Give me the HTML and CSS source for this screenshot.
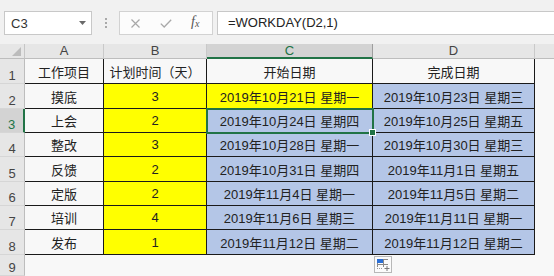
FILE: index.html
```html
<html>
    <head>
        <meta charset="utf-8">
        <title>WORKDAY</title>
        <link rel="stylesheet" href="styles.css">
    </head>
    <body>
        <div class="toolbar">
            <div class="namebox">
                <span>C3</span>
                <svg class="caret" width="7" height="4" viewBox="0 0 7 4"><path d="M0 0 L7 0 L3.5 4 Z" fill="#6a6a6a"/></svg>
            </div>
            <div class="grip"><i></i><i></i><i></i></div>
            <div class="fnbuttons">
                <svg class="btn-x" width="9" height="9" viewBox="0 0 9 9"><path d="M0.5 0.5 L8.5 8.5 M8.5 0.5 L0.5 8.5" stroke="#a8a8a8" stroke-width="1.2" fill="none"/></svg>
                <svg class="btn-ok" width="12" height="9" viewBox="0 0 12 9"><path d="M0.8 4.6 L4.2 8 L11.2 0.8" stroke="#a8a8a8" stroke-width="1.3" fill="none"/></svg>
                <span class="fx">f<sub>x</sub></span>
            </div>
            <div class="formula">=WORKDAY(D2,1)</div>
        </div>

        <div class="sheet">
            <div class="corner"><svg width="9" height="9" viewBox="0 0 9 9"><path d="M9 0 L9 9 L0 9 Z" fill="#bcbcbc"/></svg></div>
            <div class="ch">A</div>
            <div class="ch">B</div>
            <div class="ch sel">C</div>
            <div class="ch">D</div>
            <div class="ch end"></div>

            <div class="rh">1</div>
            <div class="c">工作项目</div>
            <div class="c">计划时间（天）</div>
            <div class="c">开始日期</div>
            <div class="c">完成日期</div>
            <div class="e"></div>

            <div class="rh">2</div>
            <div class="c">摸底</div>
            <div class="c y">3</div>
            <div class="c y">2019年10月21日 星期一</div>
            <div class="c b">2019年10月23日 星期三</div>
            <div class="e"></div>

            <div class="rh sel">3</div>
            <div class="c">上会</div>
            <div class="c y">2</div>
            <div class="c b active">2019年10月24日 星期四</div>
            <div class="c b">2019年10月25日 星期五</div>
            <div class="e"></div>

            <div class="rh">4</div>
            <div class="c">整改</div>
            <div class="c y">3</div>
            <div class="c b">2019年10月28日 星期一</div>
            <div class="c b">2019年10月30日 星期三</div>
            <div class="e"></div>

            <div class="rh">5</div>
            <div class="c">反馈</div>
            <div class="c y">2</div>
            <div class="c b">2019年10月31日 星期四</div>
            <div class="c b">2019年11月1日 星期五</div>
            <div class="e"></div>

            <div class="rh">6</div>
            <div class="c">定版</div>
            <div class="c y">2</div>
            <div class="c b">2019年11月4日 星期一</div>
            <div class="c b">2019年11月5日 星期二</div>
            <div class="e"></div>

            <div class="rh">7</div>
            <div class="c">培训</div>
            <div class="c y">4</div>
            <div class="c b">2019年11月6日 星期三</div>
            <div class="c b">2019年11月11日 星期一</div>
            <div class="e"></div>

            <div class="rh">8</div>
            <div class="c">发布</div>
            <div class="c y">1</div>
            <div class="c b">2019年11月12日 星期二</div>
            <div class="c b">2019年11月12日 星期二</div>
            <div class="e"></div>

            <div class="rh">9</div>
            <div class="e"></div>
            <div class="e"></div>
            <div class="e"></div>
            <div class="e"></div>
            <div class="e"></div>

            <div class="quick">
                <svg width="18" height="17" viewBox="0 0 18 17">
                    <rect x="0.5" y="0.5" width="17" height="16" fill="#fbfbfb" stroke="#b8b8b8"/>
                    <rect x="3" y="3" width="6" height="4" fill="#2b6fd6"/>
                    <path d="M10 3.5 H14 M3 8.5 H14 M9.5 3 V11 M3.5 7 V11" stroke="#8a8a8a" stroke-width="1" fill="none"/>
                    <path d="M3 12.5 H9" stroke="#9a9a9a" stroke-width="1" stroke-dasharray="1 1" fill="none"/>
                    <path d="M13 10 V15 M10.5 12.5 H15.5" stroke="#7a7a7a" stroke-width="1" fill="none"/>
                </svg>
            </div>
        </div>
    </body>
</html>
```

FILE: styles.css
```css
html, body{
    margin: 0px;
    padding: 0px;
    width: 100%;
    height: 100%;
    overflow: hidden;
    background-color: #f3f3f3;
    font-family: "Liberation Sans", "Noto Sans CJK SC", sans-serif;
    font-size: 13px;
    color: #222;
}
.toolbar{
    display: flex;
    align-items: flex-start;
    height: 44px;
    box-sizing: border-box;
    padding-top: 11px;
    padding-left: 4px;
    background-color: #f1f1f1;
}
.namebox{
    display: flex;
    align-items: center;
    justify-content: space-between;
    width: 88px;
    height: 24px;
    box-sizing: border-box;
    padding-left: 6px;
    padding-right: 5px;
    background-color: white;
    border: 1px solid #c8c8c8;
    color: #333;
}
.grip{
    display: flex;
    flex-direction: column;
    align-items: center;
    justify-content: center;
    gap: 2px;
    width: 27px;
    height: 24px;
}
.grip i{
    display: block;
    width: 2px;
    height: 2px;
    background-color: #a9a9a9;
}
.fnbuttons{
    display: flex;
    align-items: center;
    width: 94px;
    height: 24px;
    box-sizing: border-box;
    background-color: #fcfcfc;
    border: 1px solid #d2d2d2;
}
.btn-x{
    margin-left: 11px;
}
.btn-ok{
    margin-left: 20px;
}
.fx{
    margin-left: 19px;
    font-family: "Liberation Serif", serif;
    font-style: italic;
    font-size: 14px;
    color: #555;
    line-height: 14px;
}
.fx sub{
    font-size: 10px;
    vertical-align: -1px;
}
.formula{
    flex: 1;
    height: 24px;
    box-sizing: border-box;
    margin-left: 4px;
    margin-right: -2px;
    padding-left: 10px;
    line-height: 22px;
    background-color: white;
    border: 1px solid #c8c8c8;
    color: #222;
}
.sheet{
    position: relative;
    display: grid;
    grid-template-columns: 25px 79px 103px 166px 162px 1fr;
    grid-template-rows: 15px 25px 25px 24px 24px 25px 24px 24px 25px 21px;
    background-color: #f8f8f8;
}
.corner, .ch, .rh{
    box-sizing: border-box;
    background-color: #e6e6e6;
    color: #444;
    display: flex;
    align-items: center;
    justify-content: center;
}
.corner{
    justify-content: flex-end;
    align-items: flex-end;
    padding-right: 3px;
    padding-bottom: 2px;
    border-right: 1px solid #c6c6c6;
    border-bottom: 1px solid #bdbdbd;
}
.ch{
    border-right: 1px solid #c9c9c9;
    border-bottom: 1px solid #bdbdbd;
    line-height: 14px;
}
.ch.end{
    border-right: none;
}
.ch.sel{
    background-color: #d3d3d3;
    color: #217346;
    border-bottom: 2px solid #217346;
    border-right-color: #9e9e9e;
}
.rh{
    align-items: flex-end;
    padding-bottom: 0px;
    line-height: 15px;
    border-right: 1px solid #bdbdbd;
    border-bottom: 1px solid #d6d6d6;
}
.rh.sel{
    background-color: #d3d3d3;
    color: #217346;
    border-right: 2px solid #217346;
}
.c{
    display: flex;
    align-items: center;
    justify-content: center;
    box-sizing: border-box;
    border-right: 1px solid #1a1a1a;
    border-bottom: 1px solid #1a1a1a;
    white-space: nowrap;
    color: #222;
}
.y{
    background-color: #ffff00;
}
.b{
    background-color: #b4c6e7;
}
.active{
    position: relative;
    outline: 2px solid #217346;
    outline-offset: -1px;
}
.active::after{
    content: '';
    position: absolute;
    right: -4px;
    bottom: -4px;
    width: 5px;
    height: 5px;
    background-color: #217346;
    border: 1px solid white;
}
.e{
    background-color: #f8f8f8;
}
.quick{
    position: absolute;
    left: 374px;
    top: 212px;
    width: 18px;
    height: 17px;
}
.quick svg{
    display: block;
}
```
